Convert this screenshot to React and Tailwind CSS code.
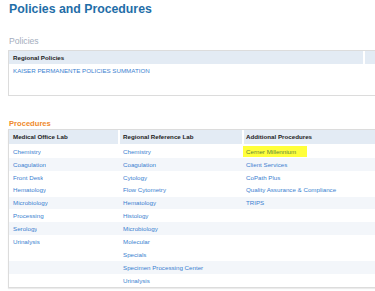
const medicalOffice = [
  "Chemistry",
  "Coagulation",
  "Front Desk",
  "Hematology",
  "Microbiology",
  "Processing",
  "Serology",
  "Urinalysis",
];

const regionalRef = [
  "Chemistry",
  "Coagulation",
  "Cytology",
  "Flow Cytometry",
  "Hematology",
  "Histology",
  "Microbiology",
  "Molecular",
  "Specials",
  "Specimen Processing Center",
  "Urinalysis",
];

const additional = [
  "Cerner Millennium",
  "Client Services",
  "CoPath Plus",
  "Quality Assurance & Compliance",
  "TRIPS",
];

// rows that get the light stripe
const striped = [1, 4, 6, 9];

function Cell({ text, highlight }) {
  if (!text) return <div />;
  if (highlight)
    return (
      <div className="flex items-center pl-[2px]">
        <span className="inline-flex items-center h-[11px] -ml-[3px] pl-[3px] pr-[11px] bg-[#ffff3a] text-[#5f8a3a]">
          {text}
        </span>
      </div>
    );
  return <div className="flex items-center pl-[3px] text-[#3b7fd0] truncate">{text}</div>;
}

export default function App() {
  return (
    <div className="w-[375px] h-[291px] overflow-hidden bg-white font-['Liberation_Sans',Arial,sans-serif]">
      <h1 className="ml-[9px] mt-[1.5px] text-[12.3px] leading-[15px] font-bold text-[#1f6ea8]">
        Policies and Procedures
      </h1>

      {/* Policies */}
      <h2 className="ml-[9px] mt-[19.5px] text-[8.6px] leading-[10px] text-[#a3adbd]">Policies</h2>
      <div className="ml-[8px] mt-[4px] w-[380px] h-[46px] border border-[#dcdcdc] text-[6.2px]">
        <div className="grid grid-cols-[354px_1fr] gap-x-[2px] h-[13px]">
          <div className="bg-[#e3ebf4] flex items-center pl-[4px] font-bold text-[#222]">
            Regional Policies
          </div>
          <div className="bg-[#e3ebf4]" />
        </div>
        <div className="h-[13px] flex items-center pl-[4px] text-[#3b7fd0]">
          KAISER PERMANENTE POLICIES SUMMATION
        </div>
      </div>

      {/* Procedures */}
      <h2 className="ml-[9px] mt-[22.5px] text-[7.6px] leading-[10px] font-bold text-[#ef8a2c]">
        Procedures
      </h2>
      <div className="ml-[8px] w-[380px] border border-[#dcdcdc] shadow-[0_1px_1px_rgba(0,0,0,0.08)] text-[6.2px]">
        <div className="grid grid-cols-[109px_122px_1fr] gap-x-[2px] h-[14px]">
          <div className="bg-[#e3ebf4] flex items-center pl-[4px] font-bold text-[#222]">Medical Office Lab</div>
          <div className="bg-[#e3ebf4] flex items-center pl-[3px] font-bold text-[#222]">Regional Reference Lab</div>
          <div className="bg-[#e3ebf4] flex items-center pl-[2px] font-bold text-[#222]">Additional Procedures</div>
        </div>
        <div className="h-[1.5px]" />
        {regionalRef.map((r, i) => (
          <div
            key={i}
            className={`grid grid-cols-[109px_122px_1fr] gap-x-[2px] h-[12.9px] ${
              striped.includes(i) ? "bg-[#f3f6fa]" : "bg-white"
            }`}
          >
            <div className="pl-[1px] flex">
              <Cell text={medicalOffice[i]} />
            </div>
            <Cell text={r} />
            {additional[i] && i === 0 ? (
              <Cell text={additional[i]} highlight />
            ) : additional[i] ? (
              <div className="flex items-center pl-[2px] text-[#3b7fd0]">{additional[i]}</div>
            ) : (
              <div />
            )}
          </div>
        ))}
      </div>
    </div>
  );
}
